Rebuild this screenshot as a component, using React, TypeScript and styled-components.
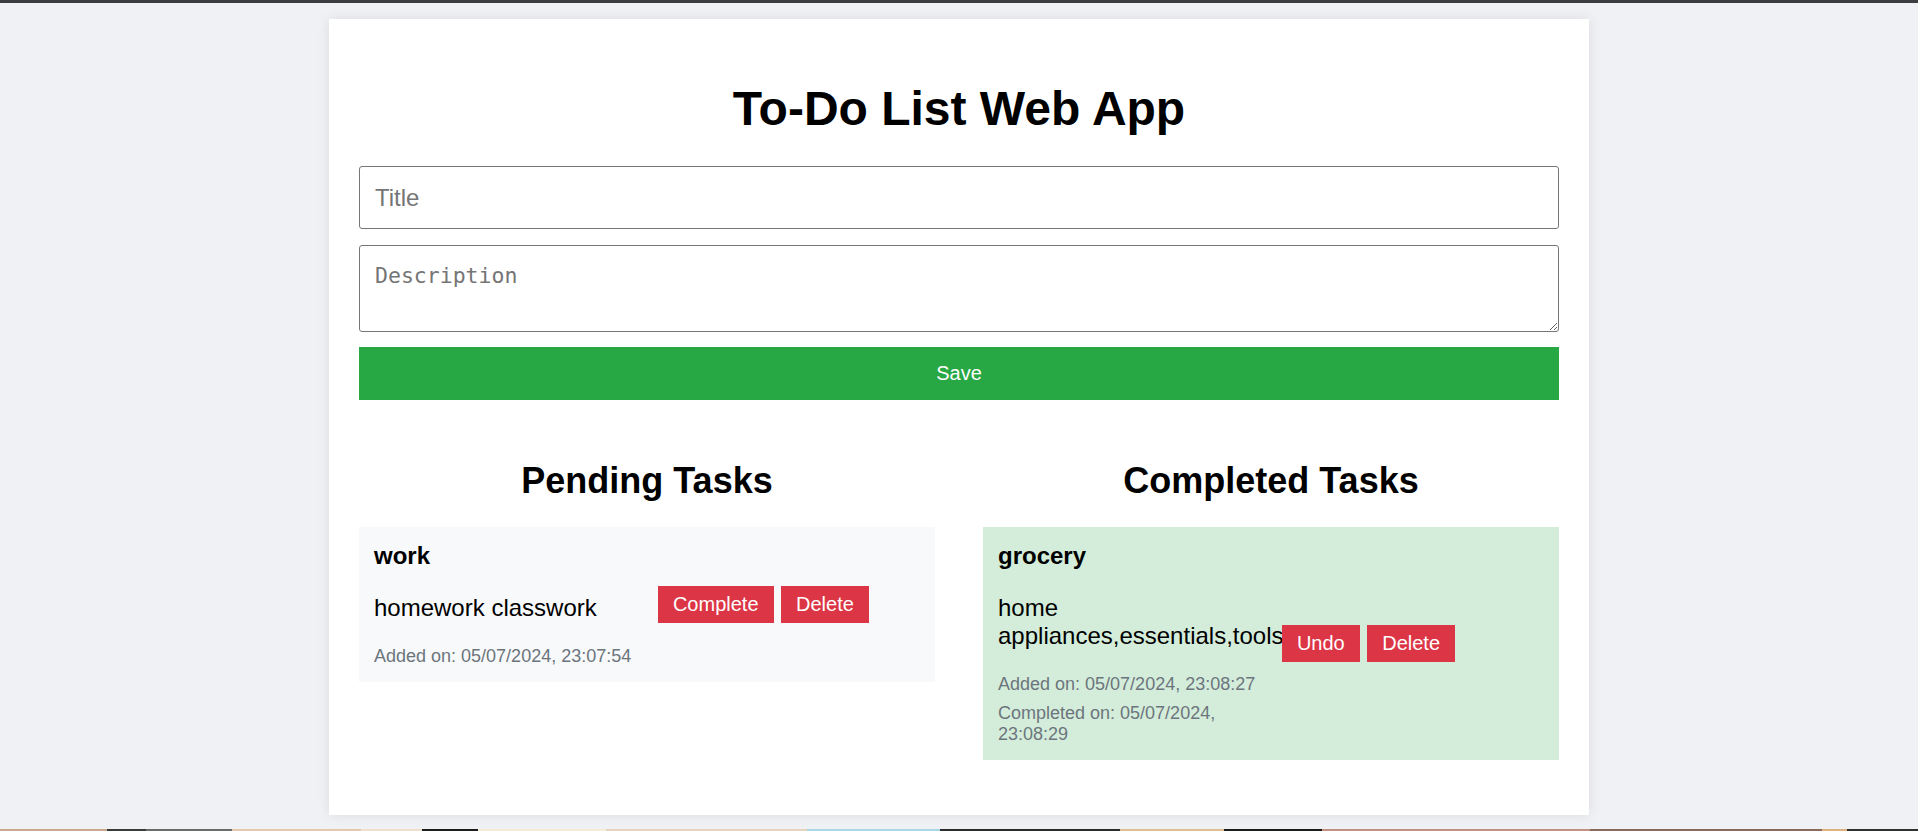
import React from "react";
import styled, { createGlobalStyle } from "styled-components";

const GlobalStyle = createGlobalStyle`
  html, body { margin: 0; padding: 0; }
  body {
    font-family: "Liberation Sans", Arial, sans-serif;
    background: #f0f1f5;
    color: #000;
  }
  * { box-sizing: border-box; }
`;

const Shell = styled.div`
  min-height: 100vh;
  display: flex;
  flex-direction: column;
`;

const TopBar = styled.div`
  height: 3px;
  background: #3d3d3f;
  flex: 0 0 3px;
`;

const Main = styled.main`
  flex: 1;
  display: flex;
  justify-content: center;
  align-items: flex-start;
  padding-top: 16px;
`;

const BottomStrip = styled.div`
  height: 2px;
  flex: 0 0 2px;
  background: linear-gradient(
    to right,
    #c9a88f 0%, #c9a88f 5.6%,
    #3a3a3a 5.6%, #3a3a3a 7.6%,
    #6b6b6b 7.6%, #6b6b6b 12.1%,
    #e6c8ae 12.1%, #e6c8ae 18.8%,
    #efdfcf 18.8%, #efdfcf 22%,
    #1c1c1c 22%, #1c1c1c 24.9%,
    #f5ecd8 24.9%, #f5ecd8 31.6%,
    #e8d3bf 31.6%, #e8d3bf 42.1%,
    #a9d7e6 42.1%, #a9d7e6 49%,
    #2b2b2b 49%, #2b2b2b 58.4%,
    #dfbf92 58.4%, #dfbf92 63.8%,
    #1b1b1b 63.8%, #1b1b1b 68.9%,
    #c0927f 68.9%, #c0927f 82.9%,
    #8a6a5a 82.9%, #8a6a5a 95%,
    #e0b080 95%, #e0b080 96.3%,
    #303030 96.3%, #303030 100%
  );
`;

const Container = styled.div`
  width: 1260px;
  background: #fff;
  padding: 30px 30px 55px;
  box-shadow: 0 0 12px rgba(0, 0, 0, 0.09);
`;

const Heading = styled.h1`
  margin: 32px 0 30px;
  text-align: center;
  font-size: 48px;
  font-weight: 700;
  line-height: normal;
`;

const Form = styled.form`
  display: flex;
  flex-direction: column;
`;

const TitleInput = styled.input`
  display: block;
  width: 100%;
  height: 63px;
  margin: 0 0 16px;
  padding: 0 15px;
  border: 1px solid #767676;
  border-radius: 3px;
  font-family: "Liberation Sans", Arial, sans-serif;
  font-size: 24px;
  color: #000;
  background: #fff;
  &::placeholder { color: #757575; }
`;

const DescArea = styled.textarea`
  display: block;
  width: 100%;
  height: 87px;
  margin: 0 0 15px;
  padding: 17px 15px 15px;
  border: 1px solid #767676;
  border-radius: 3px;
  font-family: "DejaVu Sans Mono", "Liberation Mono", monospace;
  font-size: 21.5px;
  color: #000;
  background: #fff;
  &::placeholder { color: #757575; }
`;

const SaveButton = styled.button`
  display: block;
  width: 100%;
  height: 53px;
  border: none;
  border-radius: 0;
  background: #28a745;
  color: #fff;
  font-family: "Liberation Sans", Arial, sans-serif;
  font-size: 20px;
  cursor: pointer;
`;

const Columns = styled.div`
  display: flex;
  justify-content: space-between;
  align-items: flex-start;
  margin-top: 60px;
`;

const Column = styled.section`
  width: 48%;
`;

const ColumnTitle = styled.h2`
  margin: 0 0 25px;
  text-align: center;
  font-size: 36px;
  font-weight: 700;
  line-height: normal;
`;

const Card = styled.div<{ $done?: boolean }>`
  display: flex;
  align-items: center;
  padding: 15px;
  background: ${(p) => (p.$done ? "#d4edda" : "#f8f9fa")};
`;

const Info = styled.div`
  width: 52%;
  flex: 0 0 52%;
`;

const TaskTitle = styled.h3`
  margin: 0;
  font-size: 24px;
  font-weight: 700;
  line-height: normal;
`;

const TaskDesc = styled.p`
  margin: 24px 0;
  font-size: 24px;
  line-height: normal;
`;

const Stamp = styled.small`
  display: block;
  font-size: 18px;
  line-height: normal;
  color: #6c757d;
  & + & { margin-top: 7.5px; }
`;

const Actions = styled.div`
  display: flex;
  gap: 7.5px;
`;

const ActionButton = styled.button`
  border: none;
  border-radius: 0;
  padding: 7px 15px;
  background: #dc3545;
  color: #fff;
  font-family: "Liberation Sans", Arial, sans-serif;
  font-size: 20px;
  line-height: normal;
  cursor: pointer;
`;

type Task = {
  title: string;
  desc: string;
  added: string;
  completed?: string;
};

const pending: Task[] = [
  { title: "work", desc: "homework classwork", added: "05/07/2024, 23:07:54" },
];

const done: Task[] = [
  {
    title: "grocery",
    desc: "home appliances,essentials,tools",
    added: "05/07/2024, 23:08:27",
    completed: "05/07/2024, 23:08:29",
  },
];

function TaskCard({ task, isDone }: { task: Task; isDone?: boolean }) {
  return (
    <Card $done={isDone}>
      <Info>
        <TaskTitle>{task.title}</TaskTitle>
        <TaskDesc>{task.desc}</TaskDesc>
        <Stamp>Added on: {task.added}</Stamp>
        {task.completed && <Stamp>Completed on: {task.completed}</Stamp>}
      </Info>
      <Actions>
        <ActionButton type="button">{isDone ? "Undo" : "Complete"}</ActionButton>
        <ActionButton type="button">Delete</ActionButton>
      </Actions>
    </Card>
  );
}

export default function App() {
  return (
    <>
      <GlobalStyle />
      <Shell>
        <TopBar />
        <Main>
          <Container>
            <Heading>To-Do List Web App</Heading>
            <Form onSubmit={(e) => e.preventDefault()}>
              <TitleInput type="text" placeholder="Title" />
              <DescArea placeholder="Description" />
              <SaveButton type="submit">Save</SaveButton>
            </Form>
            <Columns>
              <Column>
                <ColumnTitle>Pending Tasks</ColumnTitle>
                {pending.map((t) => (
                  <TaskCard key={t.title} task={t} />
                ))}
              </Column>
              <Column>
                <ColumnTitle>Completed Tasks</ColumnTitle>
                {done.map((t) => (
                  <TaskCard key={t.title} task={t} isDone />
                ))}
              </Column>
            </Columns>
          </Container>
        </Main>
        <BottomStrip />
      </Shell>
    </>
  );
}
